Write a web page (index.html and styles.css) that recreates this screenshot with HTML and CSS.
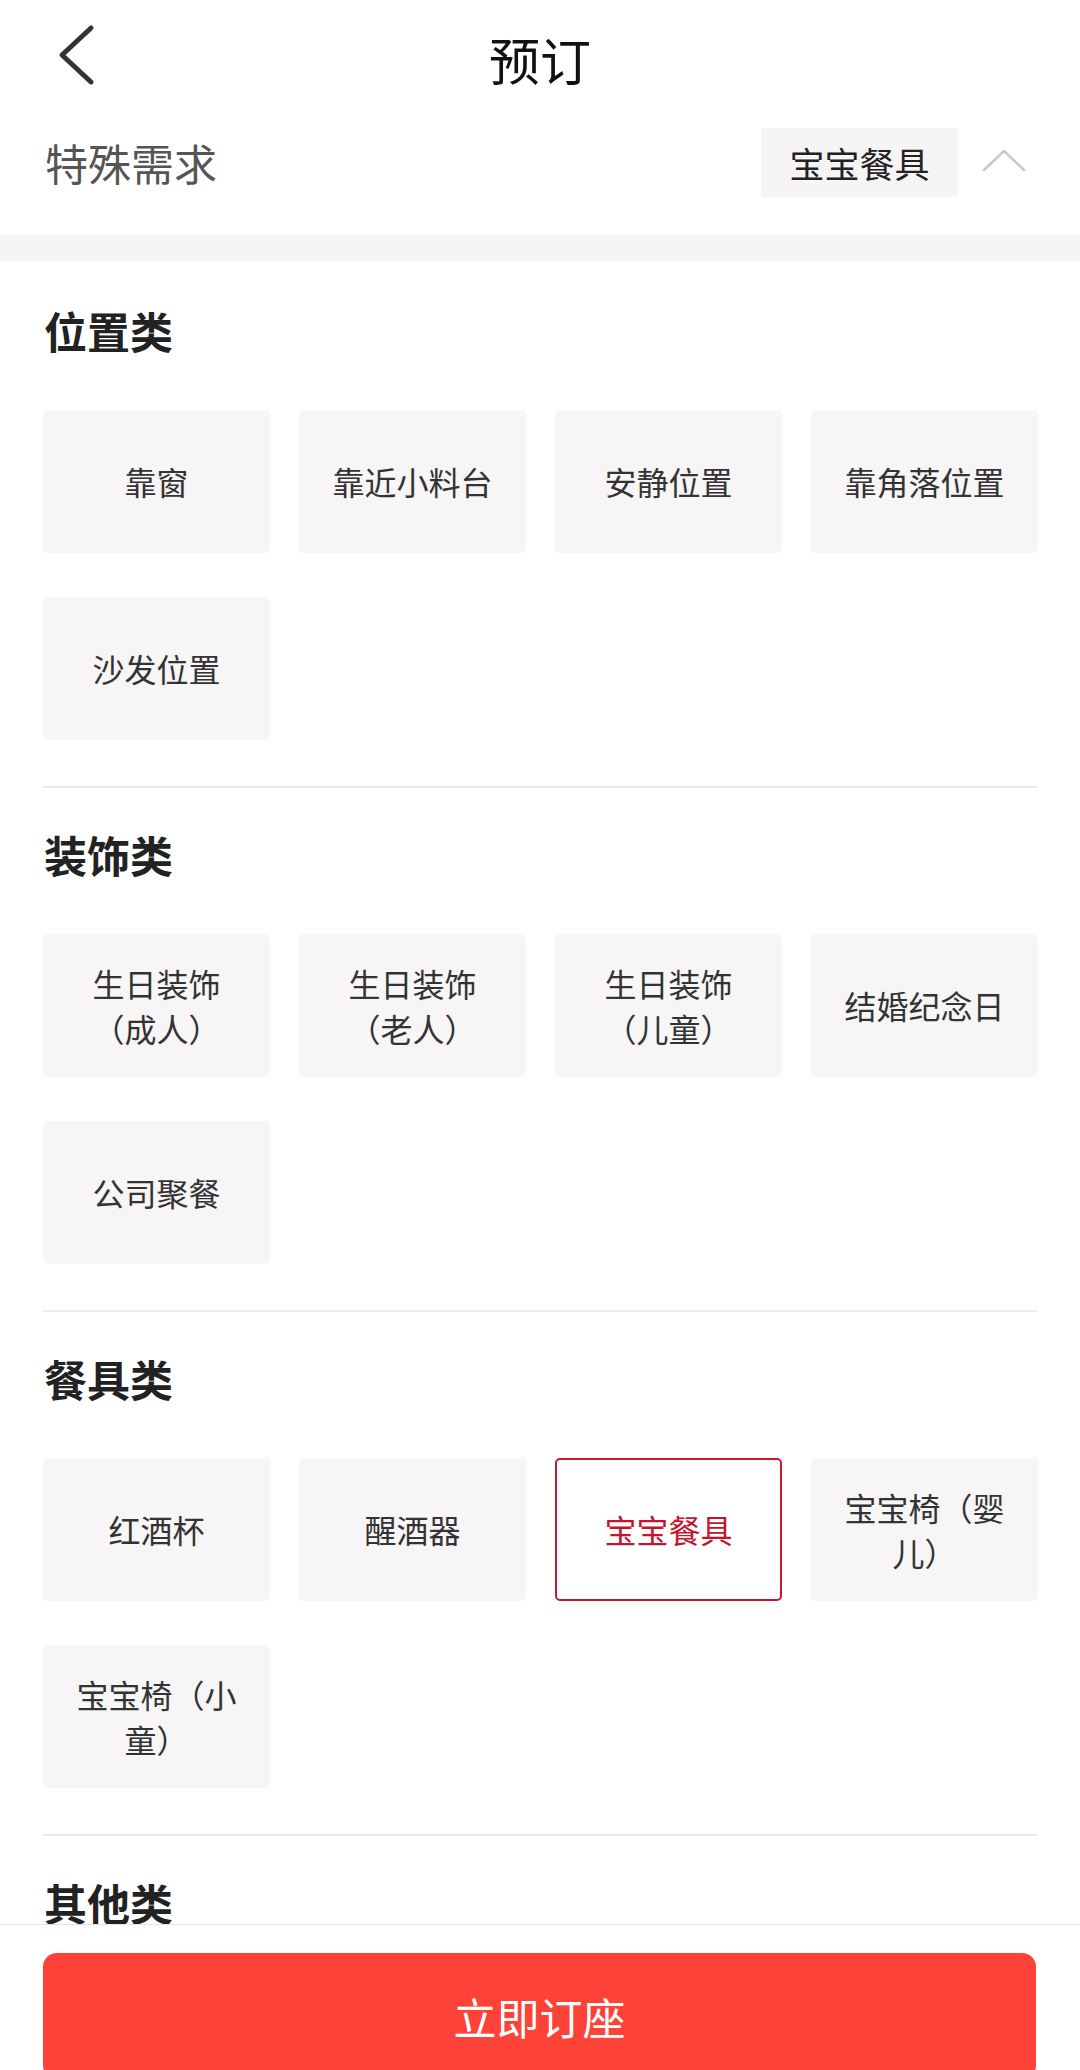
FILE: index.html
```html
<!DOCTYPE html>
<html lang="zh-CN">
<head>
<meta charset="utf-8">
<title>预订</title>
<link rel="stylesheet" href="styles.css">
</head>
<body>
<div class="page">
  <header class="nav">
    <div class="nav-left">
      <svg class="back" width="44" height="64" viewBox="0 0 44 64">
        <polyline points="35,4 6,31 35,58" fill="none" stroke="#333" stroke-width="5" stroke-linecap="round" stroke-linejoin="round"/>
      </svg>
    </div>
    <div class="nav-title">预订</div>
    <div class="nav-right"></div>
  </header>

  <div class="special">
    <div class="special-label">特殊需求</div>
    <div class="special-right">
      <div class="pill">宝宝餐具</div>
      <svg class="up" width="44" height="24" viewBox="0 0 44 24">
        <polyline points="2,21 22,2 42,21" fill="none" stroke="#c9c9c9" stroke-width="2.5" stroke-linecap="round" stroke-linejoin="round"/>
      </svg>
    </div>
  </div>

  <div class="band"></div>

  <section class="section first">
    <h2 class="section-title">位置类</h2>
    <div class="grid">
      <div class="tile">靠窗</div>
      <div class="tile">靠近小料台</div>
      <div class="tile">安静位置</div>
      <div class="tile">靠角落位置</div>
      <div class="tile">沙发位置</div>
    </div>
  </section>

  <section class="section">
    <h2 class="section-title">装饰类</h2>
    <div class="grid">
      <div class="tile">生日装饰（成人）</div>
      <div class="tile">生日装饰（老人）</div>
      <div class="tile">生日装饰（儿童）</div>
      <div class="tile">结婚纪念日</div>
      <div class="tile">公司聚餐</div>
    </div>
  </section>

  <section class="section">
    <h2 class="section-title">餐具类</h2>
    <div class="grid">
      <div class="tile">红酒杯</div>
      <div class="tile">醒酒器</div>
      <div class="tile selected">宝宝餐具</div>
      <div class="tile">宝宝椅（婴儿）</div>
      <div class="tile">宝宝椅（小童）</div>
    </div>
  </section>

  <section class="section last">
    <h2 class="section-title">其他类</h2>
  </section>

  <footer class="bottom-bar">
    <button class="book-btn">立即订座</button>
  </footer>
</div>
</body>
</html>
```

FILE: styles.css
```css
* {
  box-sizing: border-box;
}

html, body {
  margin: 0;
  padding: 0;
  background: #ffffff;
}

body {
  font-family: "Noto Sans CJK SC", "Noto Sans", sans-serif;
  color: #333;
  height: 2070px;
  overflow: hidden;
}

.page {
  width: 1080px;
}

.nav {
  height: 112px;
  display: grid;
  grid-template-columns: 1fr auto 1fr;
  align-items: center;
}

.nav-left {
  padding-left: 56px;
  display: flex;
  align-items: center;
}

.back {
  display: block;
}

.nav-title {
  font-size: 51px;
  line-height: 51px;
  color: #111;
  padding-top: 6px;
}

.special {
  display: flex;
  justify-content: space-between;
  align-items: center;
  padding: 16px 54px 38px 45px;
}

.special-label {
  font-size: 43px;
  line-height: 43px;
  color: #555;
}

.special-right {
  display: flex;
  align-items: center;
  gap: 24px;
}

.pill {
  width: 197px;
  height: 69px;
  background: #f6f4f4;
  display: flex;
  align-items: center;
  justify-content: center;
  font-size: 35px;
  color: #222;
  border-radius: 2px;
}

.up {
  display: block;
  margin-bottom: 4px;
}

.band {
  height: 26px;
  background: #f6f4f4;
}

.section {
  margin: 0 43px;
  padding: 45px 0 46px;
  border-bottom: 2px solid #ebebeb;
}

.section.first {
  padding-top: 48px;
}

.section.last {
  border-bottom: none;
}

.section-title {
  margin: 0;
  font-size: 43px;
  line-height: 43px;
  font-weight: 700;
  color: #222;
  padding-left: 1px;
}

.grid {
  margin-top: 58px;
  display: grid;
  grid-template-columns: repeat(4, 227px);
  column-gap: 29px;
  row-gap: 44px;
}

.tile {
  height: 143px;
  background: #f7f5f5;
  border-radius: 5px;
  display: flex;
  align-items: center;
  justify-content: center;
  text-align: center;
  padding: 0 22px;
  font-size: 32px;
  line-height: 45px;
  color: #333;
}

.tile.selected {
  background: #ffffff;
  border: 2px solid #c8172f;
  color: #c4142c;
}

.bottom-bar {
  position: fixed;
  left: 0;
  right: 0;
  bottom: 0;
  height: 146px;
  background: #ffffff;
  border-top: 1px solid #e3e3e3;
  padding: 28px 44px 0 43px;
  overflow: hidden;
}

.book-btn {
  display: block;
  width: 100%;
  height: 126px;
  border: none;
  border-radius: 14px;
  background: #ff4238;
  color: #ffffff;
  font-family: "Noto Sans CJK SC", "Noto Sans", sans-serif;
  font-size: 43px;
  line-height: 43px;
  padding: 0;
}
```
